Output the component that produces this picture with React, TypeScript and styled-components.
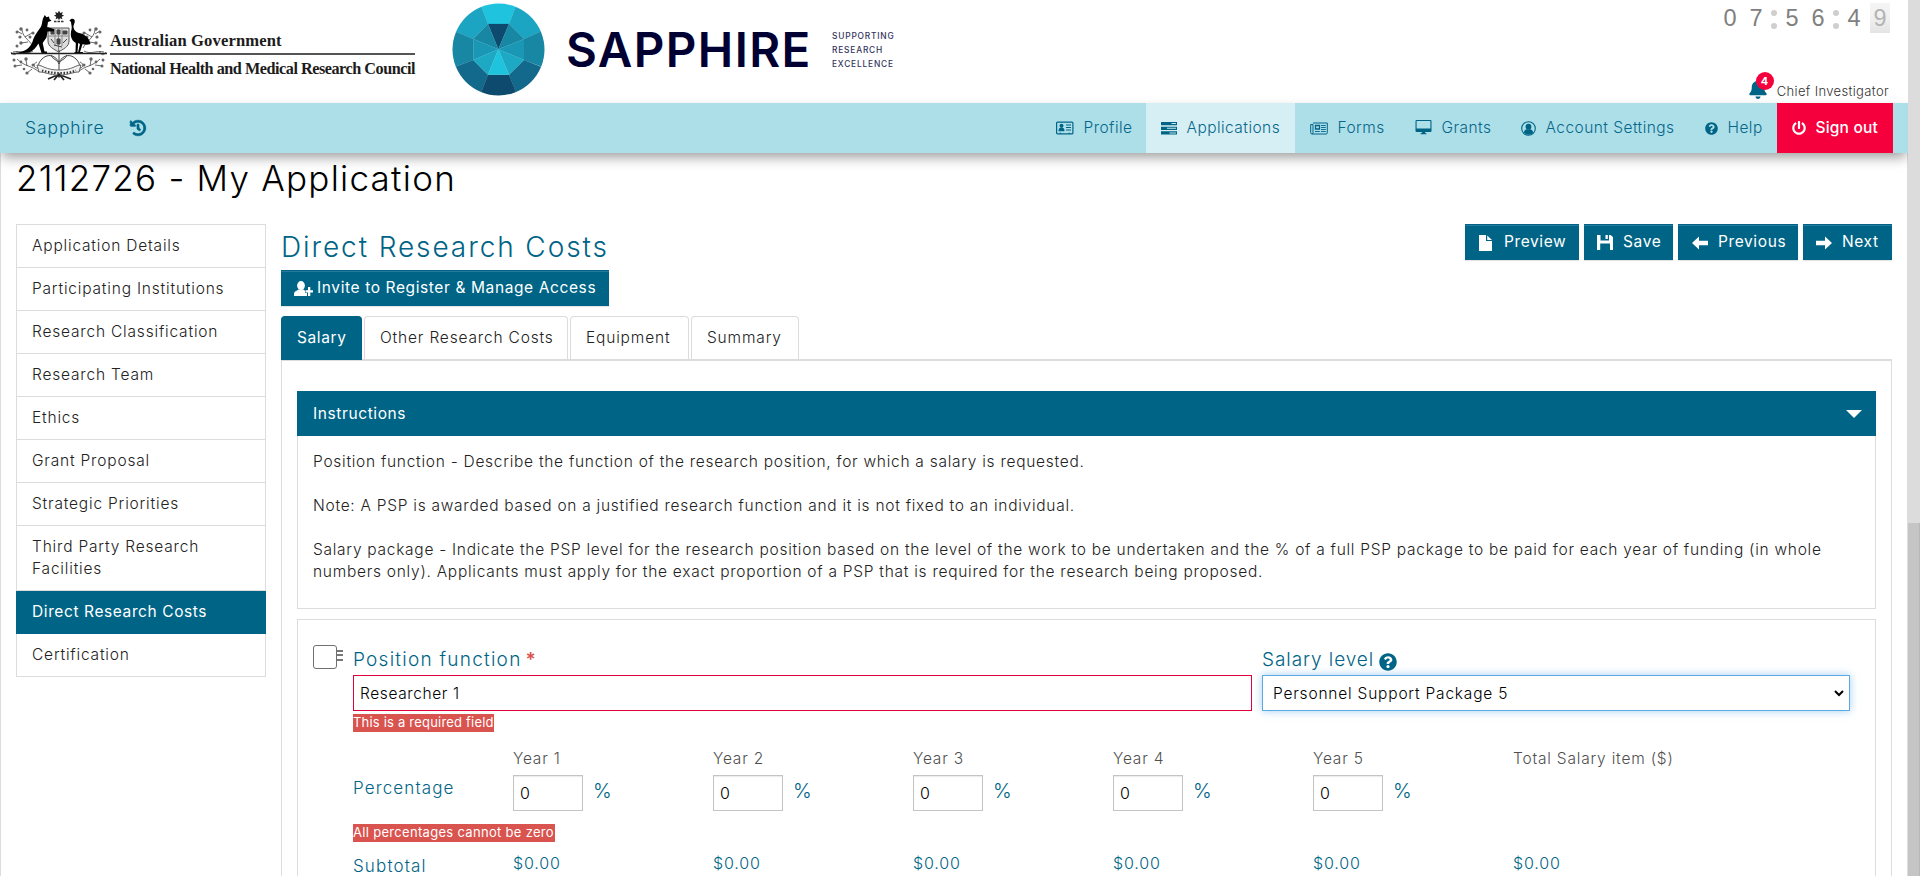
import React from "react";
import styled, { createGlobalStyle } from "styled-components";
import { FaBell, FaHistory, FaPowerOff, FaQuestionCircle } from "react-icons/fa";

const teal = "#006486";
const line = "#dcdcdc";
const red = "#f5003d";

const GlobalStyle = createGlobalStyle`
  *, *::before, *::after { box-sizing: border-box; }
  body {
    margin: 0;
    background: #fff;
    color: #222;
    font-family: Inter, "Liberation Sans", sans-serif;
    font-size: 15.5px;
    font-weight: 300;
    line-height: 22px;
    overflow: hidden;
  }
  h1, h2, p, ul { margin: 0; padding: 0; font-weight: 300; }
  svg { display: block; flex: none; }
`;

const Window = styled.div`
  display: flex;
  width: 1920px;
  height: 876px;
  overflow: hidden;
`;
const Page = styled.div`
  display: flex;
  flex-direction: column;
  width: 1908px;
  overflow: hidden;
`;
const Scrollbar = styled.div`
  width: 12px;
  padding-top: 523px;
  background: ${line};
`;
const Thumb = styled.div`
  height: 353px;
  background: #c5c5c5;
  border-right: 1px solid #b8b8b8;
`;

/* Header */
const Header = styled.header`
  display: flex;
  flex: none;
  height: 103px;
  padding: 3px 18px 0 10px;
`;
const Crest = styled.svg`
  margin-top: 7px;
`;
const Agency = styled.div`
  display: flex;
  flex-direction: column;
  width: 306px;
  margin: 26px 0 0 2px;
  padding-left: 1px;
  font-family: "Liberation Serif", serif;
  font-weight: 700;
  color: #1c1c1c;
  white-space: nowrap;
`;
const AgencyTop = styled.span`
  height: 26px;
  padding-top: 1px;
  border-bottom: 2px solid #555;
  font-size: 16.6px;
  letter-spacing: 0.12px;
`;
const AgencyName = styled.span`
  margin-top: 3px;
  font-size: 16.2px;
  letter-spacing: -0.47px;
`;
const Gem = styled.svg`
  margin-left: 37px;
`;
const Wordmark = styled.div`
  width: 249px;
  margin: 18px 0 0 21px;
  font-size: 47.5px;
  font-weight: 600;
  line-height: 58px;
  letter-spacing: 1.4px;
  color: #000033;
`;
const Tagline = styled.div`
  margin: 26px 0 0 17px;
  font-size: 8.4px;
  font-weight: 500;
  line-height: 14.2px;
  letter-spacing: 0.8px;
  color: #33335c;
`;
const HeaderSide = styled.div`
  display: flex;
  flex-direction: column;
  justify-content: space-between;
  align-items: flex-end;
  margin-left: auto;
`;
const Clock = styled.div`
  display: flex;
  align-items: center;
  height: 30px;
  font-family: "Liberation Sans", Arial, sans-serif;
  font-size: 23.5px;
  line-height: 30px;
  color: #808080;
`;
const Digit = styled.span<{ $flip?: boolean }>`
  width: 20px;
  text-align: center;
  ${(p) =>
    p.$flip &&
    `background: linear-gradient(#f5f5f5, #f0f0f0 50%, #e4e4e4); color: #b4b4b4;`}
  & + & { margin-left: 6px; }
`;
const Colon = styled.span`
  display: flex;
  flex-direction: column;
  gap: 7px;
  margin: 2px 5px 0;
  &::before, &::after {
    content: "";
    width: 6px;
    height: 6px;
    border-radius: 50%;
    background: #cfcfcf;
  }
`;
const User = styled.div`
  display: flex;
  align-items: center;
  height: 24px;
  margin-right: 1px;
  font-size: 13px;
  letter-spacing: 0.35px;
  color: #333;
`;
const Bell = styled.span`
  position: relative;
  margin: -2px 9px 2px 0;
  color: ${teal};
`;
const Count = styled.span`
  position: absolute;
  left: 8px;
  top: -7px;
  width: 18px;
  height: 18px;
  border-radius: 50%;
  background: ${red};
  color: #fff;
  font-size: 11px;
  font-weight: 700;
  line-height: 18px;
  text-align: center;
`;

/* Navigation */
const Nav = styled.nav`
  position: relative;
  display: flex;
  flex: none;
  align-items: stretch;
  height: 50px;
  padding: 0 15px 0 25px;
  background: #addfe9;
  color: ${teal};
  box-shadow: 0 6px 12px -2px rgba(0, 0, 0, 0.4);
`;
const Brand = styled.span`
  width: 105px;
  font-size: 17.5px;
  line-height: 50px;
  letter-spacing: 0.9px;
`;
const BrandIcon = styled.span`
  display: flex;
  align-items: center;
  margin-right: auto;
  svg { stroke: currentColor; stroke-width: 24px; overflow: visible; }
`;
const NavItem = styled.a<{ $w: number; $tone?: "current" | "danger" }>`
  display: flex;
  align-items: center;
  gap: 9.5px;
  width: ${(p) => p.$w}px;
  padding-left: 15px;
  letter-spacing: 0.45px;
  white-space: nowrap;
  background: ${(p) => (p.$tone === "current" ? "#d6eff4" : p.$tone === "danger" ? red : "none")};
  color: ${(p) => (p.$tone === "danger" ? "#fff" : "#06678a")};
  font-weight: ${(p) => (p.$tone === "danger" ? 500 : 300)};
  ${(p) => p.$tone === "danger" && "letter-spacing: 0.2px;"}
  svg { color: ${(p) => (p.$tone === "danger" ? "#fff" : teal)}; }
`;

/* Body */
const Body = styled.main`
  flex: 1;
  padding: 5px 15px 0;
  border: solid ${line};
  border-width: 0 1px;
`;
const Title = styled.h1`
  height: 40px;
  font-size: 35px;
  line-height: 40px;
  letter-spacing: 1.24px;
  color: #000;
`;
const Columns = styled.div`
  display: flex;
  gap: 15px;
  margin-top: 26px;
`;
const Sidebar = styled.ul`
  flex: none;
  align-self: flex-start;
  width: 250px;
  list-style: none;
  border: 1px solid ${line};
  border-top: 0;
`;
const SideItem = styled.li<{ $active?: boolean }>`
  padding: 10px 15px;
  border-top: 1px solid ${line};
  letter-spacing: 0.81px;
  ${(p) =>
    p.$active &&
    `margin: 0 -1px -1px;
     padding: 10px 0 11px 16px;
     position: relative;
     background: ${teal};
     background-clip: padding-box;
     color: #fff;
     font-weight: 400;
     letter-spacing: 0.6px;`}
`;
const Main = styled.section`
  flex: none;
  width: 1611px;
`;
const TopRow = styled.div`
  display: flex;
  justify-content: space-between;
  height: 46px;
`;
const Heading = styled.h2`
  margin: 6px 0 0;
  font-size: 28px;
  line-height: 34px;
  letter-spacing: 1.9px;
  color: ${teal};
`;
const Toolbar = styled.div`
  display: flex;
  gap: 5px;
`;
const Button = styled.button<{ $w: number; $gap: number; $pad: number }>`
  display: flex;
  align-items: center;
  gap: ${(p) => p.$gap}px;
  width: ${(p) => p.$w}px;
  height: 36px;
  padding: 0 0 1px ${(p) => p.$pad}px;
  border: 0;
  background: ${teal};
  box-shadow: inset 0 1px 0 ${teal}, inset 0 2px 0 #26799a, 0 1px 1px rgba(0, 0, 0, 0.1);
  color: #fff;
  font: 400 15.5px/22px Inter, sans-serif;
  letter-spacing: 0.61px;
  white-space: nowrap;
  svg { margin-top: 2px; }
`;
const Tabs = styled.div`
  display: flex;
  gap: 2px;
  height: 45px;
  margin-top: 10px;
  border-bottom: 2px solid ${line};
`;
const Tab = styled.div<{ $w: number; $active?: boolean }>`
  width: ${(p) => p.$w}px;
  height: ${(p) => (p.$active ? 44 : 43)}px;
  padding-left: 15px;
  border: 1px solid ${(p) => (p.$active ? teal : line)};
  border-bottom: 0;
  border-radius: 4px 4px 0 0;
  background: ${(p) => (p.$active ? teal : "#fff")};
  color: ${(p) => (p.$active ? "#fff" : "#222")};
  font-weight: ${(p) => (p.$active ? 400 : 300)};
  letter-spacing: ${(p) => (p.$active ? 0.6 : 0.83)}px;
  line-height: 42px;
`;
const Panel = styled.div`
  padding: 30px 15px 0;
  height: 560px;
  border: solid ${line};
  border-width: 0 1px;
`;
const CardHead = styled.div`
  display: flex;
  align-items: center;
  justify-content: space-between;
  height: 45px;
  padding: 0 14px 0 16px;
  background: ${teal};
  color: #fff;
  font-weight: 400;
  letter-spacing: 0.6px;
`;
const CardBody = styled.div`
  height: 173px;
  padding: 15px 15px 0;
  border: 1px solid ${line};
  border-top: 0;
  letter-spacing: 0.73px;
  p + p { margin-top: 22px; }
`;
const Entry = styled.div`
  display: flex;
  margin-top: 10px;
  padding: 26px 25px 0 15px;
  height: 400px;
  border: 1px solid ${line};
`;
const Check = styled.span`
  width: 24px;
  height: 24px;
  margin-top: -1px;
  border: 1px solid #707070;
  border-radius: 3px;
`;
const Grip = styled.span`
  width: 6px;
  height: 11px;
  margin: 4px 10px 0 0;
  background: repeating-linear-gradient(#777 0 2px, #fff 2px 4.5px);
`;
const Fields = styled.div`
  flex: 1;
`;
const FieldRow = styled.div`
  display: grid;
  grid-template-columns: 899px 588px;
  gap: 10px;
`;
const Label = styled.label<{ $spacing: number }>`
  display: flex;
  align-items: center;
  height: 29px;
  padding-bottom: 2px;
  font-size: 19px;
  letter-spacing: ${(p) => p.$spacing}px;
  color: ${teal};
  svg { margin: 5px 0 0 5px; }
`;
const Star = styled.span`
  margin-left: 4px;
  color: #d9534f;
  font-weight: 600;
`;
const TextBox = styled.div`
  height: 36px;
  padding: 1px 0 0 6px;
  border: 1px solid #e0003c;
  color: #000;
  line-height: 34px;
  letter-spacing: 0.6px;
`;
const SelectBox = styled(TextBox)`
  display: flex;
  align-items: center;
  justify-content: space-between;
  padding: 1px 5px 0 10px;
  border-color: #5fa9e3;
  box-shadow: 0 0 8px rgba(102, 175, 233, 0.6);
  letter-spacing: 0.8px;
`;
const ErrorNote = styled.div<{ $w: number; $spacing: number }>`
  width: ${(p) => p.$w}px;
  height: 18px;
  background: #d9534f;
  color: #fff;
  font-size: 13px;
  font-weight: 400;
  line-height: 17px;
  letter-spacing: ${(p) => p.$spacing}px;
  white-space: nowrap;
`;
const Grid = styled.div<{ $top: number }>`
  display: grid;
  grid-template-columns: 160px repeat(5, 200px) 1fr;
  margin-top: ${(p) => p.$top}px;
`;
const Year = styled.span`
  height: 28px;
  padding-top: 1px;
  color: #505050;
  letter-spacing: 0.8px;
`;
const RowName = styled.span`
  font-size: 17px;
  line-height: 26px;
  letter-spacing: 1.13px;
  color: ${teal};
`;
const Percent = styled.span`
  display: flex;
  gap: 10px;
  font-size: 20px;
  line-height: 32px;
  color: ${teal};
`;
const NumberBox = styled(TextBox)`
  width: 70px;
  padding-top: 0;
  border-color: #c4c4c4;
  box-shadow: inset 0 1px 1px rgba(0, 0, 0, 0.08);
  font-size: 16px;
`;
const Amount = styled.span`
  margin-top: -1px;
  font-size: 16px;
  letter-spacing: 0.85px;
  color: ${teal};
`;
const Notes = styled.div`
  margin-top: 3px;
`;
const ZeroNote = styled.div`
  margin-top: 13px;
`;

/* Drawings */
function Sprig() {
  return (
    <g fill="none" stroke="#444" strokeWidth="0.800">
      <path d="M1 52c2 5 7 2 6-1M3 52c8-2 13 3 20-1M24 48C20 40 13 38 12 30M18 42l-7 1M15 37l7-4M12 34l-5-3" />
      <path d="M7 59c8 8 14 6 22 13M12 65l-7 1M17 66l-1-6M22 69l-5 4M27 62c-5 2-3 7 2 6" />
      <g fill="#666" stroke="none">
        <circle cx="11" cy="29" r="1.800" /><circle cx="7" cy="32" r="1.500" /><circle cx="10" cy="37" r="1.600" />
        <circle cx="17" cy="30" r="1.400" /><circle cx="23" cy="33" r="1.600" /><circle cx="11" cy="43" r="1.700" />
        <circle cx="20" cy="37" r="1.500" /><circle cx="7" cy="46" r="1.500" /><circle cx="4" cy="60" r="1.500" />
        <circle cx="5" cy="66" r="1.500" /><circle cx="16" cy="59" r="1.700" /><circle cx="11" cy="62" r="1.400" />
        <circle cx="17" cy="73" r="1.600" /><circle cx="23" cy="65" r="1.500" /><circle cx="14" cy="69" r="1.300" />
      </g>
    </g>
  );
}
function CoatOfArms() {
  return (
    <Crest width="97" height="71" viewBox="0 10 97 71">
      <Sprig />
      <g transform="matrix(-1 0 0 1 97 0)"><Sprig /></g>
      <path d="M49 10.500l1.200 2.400 2.600-.9-.9 2.600 2.200 1.200-2.400 1 .7 2.400-2.400-1-1 2-1-2-2.400 1 .7-2.400-2.400-1 2.200-1.200-.9-2.600 2.600.9z" fill="#222" />
      <path d="M44 21.500h10" stroke="#333" strokeWidth="1.500" strokeDasharray="2.500 1" />
      <path d="M38 28h21v13c0 6-6 8-10.500 11C44 49 38 47 38 41z" fill="#ddd" stroke="#555" />
      <path d="M39 36h19M45 29v17M52 29v17M48.500 29v22" stroke="#888" />
      <path d="M41 31h3v3h-3zM47 30h3v4h-3zM53 31h4v3h-4zM41 39l3 4M47 39h3v5h-3zM53 43l4-4M44 45l8 2" fill="#444" stroke="#444" />
      <path d="M34 16.500l.8-1.500 1.700 2.300 2.500-.8.5 2.500 2 1.700-3.500 1.300-.8 5 7.300 2.300-.5 2-6.500.2-1 6-3.800 5.500 1.800 8.500h2.500v1.500h-5.500l-3-9.500c-2.500 4-5 7-8.500 8.500-3 1-8 1.300-13 .8 9-1.500 13-5 15.500-11 2-8 7.500-12 9-16.500 1-3 .5-5.500 2.500-8.800z" fill="#000" />
      <path d="M59.500 20.500c1.500-2.500 5-2.300 5.300.3.200 2.700-1.800 4.200-1.300 6.700.6 3 2.500 4.500 5.500 5.500 6 1 10.500 5.500 11.500 11-3 1-5 .8-8 .3l-2.500 7.700h3v1.500h-5.200l2.200-9.500-1.800-1-.7 9h1.500v1.500h-4.500v-1.500h1l.3-9c-5-3-5.800-8-4.300-13.500.8-3-.5-5-.5-7.500z" fill="#000" />
      <path d="M1 53.500h96" stroke="#222" strokeWidth="1.500" />
      <path d="M49 50v28M49 62c-5-8-12-8-17-3s-5 10 3 12M49 62c5-8 12-8 17-3s5 10-3 12M41 55c2 5 6 4 8 9 2-5 6-4 8-9" fill="none" stroke="#444" />
      <path d="M27 65c6 0 8 5 22 5s16-5 22-5l-2 7c-6 0-10 3-20 3s-14-3-20-3z" fill="#f0f0f0" stroke="#444" strokeWidth="0.800" />
      <path d="M32 70.500c10 3 24 4 34 0" fill="none" stroke="#333" strokeWidth="2.200" strokeDasharray="1.500 1.600" />
      <path d="M38 79l7-3h8l8 3M44 80l5-6 5 6" fill="none" stroke="#222" strokeWidth="1.700" />
    </Crest>
  );
}
const facets: [string, string][] = [
  ["155,22 145,0 268,0 258,22 238,73 175,73", "#20c3dd"],
  ["258,22 268,0 350,0 350,89 330,97 283,118 238,73", "#1ba5c3"],
  ["155,22 145,0 60,0 60,89 80,97 131,118 175,73", "#1ba5c3"],
  ["350,89 350,208 332,200 283,181 283,118 330,97", "#1787a4"],
  ["60,89 60,208 80,200 131,181 131,118 80,97", "#1787a4"],
  ["350,208 350,300 268,300 238,225 283,181", "#12698b"],
  ["60,208 60,300 146,300 175,225 131,181", "#12698b"],
  ["238,225 268,300 146,300 175,225", "#0d4a6d"],
  ["175,73 238,73 206,149", "#0d4a6d"],
  ["238,73 283,118 206,149", "#1787a4"],
  ["175,73 131,118 206,149", "#1787a4"],
  ["283,118 283,181 206,149", "#1a97b5"],
  ["131,118 131,181 206,149", "#1a97b5"],
  ["283,181 238,225 206,149", "#1da9c4"],
  ["131,181 175,225 206,149", "#1da9c4"],
  ["175,225 238,225 206,149", "#20c3dd"],
];
function SapphireGem() {
  return (
    <Gem width="93" height="93" viewBox="67 10 279 279">
      <clipPath id="gem"><circle cx="206.500" cy="149.500" r="138" /></clipPath>
      <g clipPath="url(#gem)">
        {facets.map(([points, fill]) => (
          <polygon key={points} points={points} fill={fill} stroke={fill} strokeWidth="0.600" />
        ))}
      </g>
    </Gem>
  );
}
const IdCard = () => (
  <svg width="18" height="14" viewBox="0 0 18 14" fill="currentColor">
    <rect x="0.600" y="1.100" width="16.300" height="11.800" rx="1" fill="none" stroke="currentColor" strokeWidth="1.200" />
    <circle cx="5.500" cy="4.800" r="2" />
    <path d="M2.500 10.200c0-3 1.200-3.600 3-3.600s3 .6 3 3.600z" />
    <path d="M10 3.500h5v1.100h-5zM10 6h5v1.100h-5zM10 8.500h5v1.100h-5zM3.500 11.800h1.500v1H3.500zM12.500 11.800H14v1h-1.500z" />
  </svg>
);
const Tasks = () => (
  <svg width="16" height="14" viewBox="0 0 16 14">
    <path d="M0 1h16v3.200H0zM0 5.700h16v3.200H0zM0 10.300h16v3.200H0z" fill="currentColor" />
    <path d="M10.500 2.100H15v1h-4.500zM6 6.800h9v1H6zM8.500 11.400H15v1H8.500z" fill="#c9e6ee" />
  </svg>
);
const Newspaper = () => (
  <svg width="18" height="13" viewBox="0 0 18 13" fill="none" stroke="currentColor">
    <path d="M3 1h14.300v9.800a1.200 1.200 0 0 1-1.200 1.200H2.200A1.400 1.400 0 0 1 .7 10.600V2.500H3v8.300a1 1 0 0 1-1 1.100" />
    <path d="M5.500 3.500h4v3.500h-4z" strokeWidth="1.300" />
    <path d="M11 3.500h4.800M11 5.500h4.800M11 7.500h4.800M5 9.500h4.800M11 9.500h4.800" strokeWidth="0.900" />
  </svg>
);
const Monitor = () => (
  <svg width="17" height="16" viewBox="0 0 17 16" fill="currentColor">
    <path d="M1.500 0h14a1 1 0 0 1 1 1v10a1 1 0 0 1-1 1h-14a1 1 0 0 1-1-1V1a1 1 0 0 1 1-1zm.1 1.100V8.500h13.800V1.100zM7 12h3l.4 1.200H11.500v1h-6v-1h1.200z" fillRule="evenodd" />
  </svg>
);
const Person = () => (
  <svg width="15" height="15" viewBox="0 0 15 15" fill="currentColor">
    <circle cx="7.500" cy="7.500" r="6.800" fill="none" stroke="currentColor" strokeWidth="1.100" />
    <circle cx="7.500" cy="5.700" r="2.900" />
    <path d="M2.800 11.500c.4-2 1.600-3 3-3.200h3.400c1.400.2 2.600 1.200 3 3.200-2.800 2.900-6.600 2.900-9.400 0z" />
  </svg>
);
const FileIcon = () => (
  <svg width="13" height="16" viewBox="0 0 13 16" fill="#fff">
    <path d="M0 0h7v6h6v10H0zM8.200 0.500L13 5H8.200z" />
  </svg>
);
const Floppy = () => (
  <svg width="16" height="15" viewBox="0 0 16 15" fill="#fff">
    <path d="M0 0h3.500v5.500h8.500V0h1.500L16 2v13h-3V8.500H3.200V15H0zM8.500 0h2.300v4H8.500z" />
  </svg>
);
const Arrow = ({ flip }: { flip?: boolean }) => (
  <svg width="16" height="14" viewBox="0 0 16 14" fill="#fff">
    <path d="M0 7l7-6.500v4.200h9v4.600H7v4.200z" transform={flip ? "matrix(-1 0 0 1 16 0)" : undefined} />
  </svg>
);
const AddPerson = () => (
  <svg width="19" height="16" viewBox="0 0 19 16" fill="#fff">
    <ellipse cx="7" cy="4.600" rx="3.900" ry="4.500" />
    <path d="M0 15v-2.500C0 10.500 2.500 10 4.500 8.500h5l1.500 1.300V12h2v3zM14 6h2.300v3.200H19v2.300h-2.700V15H14v-3.500h-2.500V9.200H14z" />
  </svg>
);

const sections = [
  "Application Details", "Participating Institutions", "Research Classification", "Research Team", "Ethics",
  "Grant Proposal", "Strategic Priorities", "Third Party Research Facilities", "Direct Research Costs", "Certification",
];
const years = [1, 2, 3, 4, 5];

export default function App() {
  return (
    <Window>
      <GlobalStyle />
      <Page>
        <Header>
          <CoatOfArms />
          <Agency>
            <AgencyTop>Australian Government</AgencyTop>
            <AgencyName>National Health and Medical Research Council</AgencyName>
          </Agency>
          <SapphireGem />
          <Wordmark>SAPPHIRE</Wordmark>
          <Tagline>SUPPORTING<br />RESEARCH<br />EXCELLENCE</Tagline>
          <HeaderSide>
            <Clock>
              <Digit>0</Digit><Digit>7</Digit><Colon />
              <Digit>5</Digit><Digit>6</Digit><Colon />
              <Digit>4</Digit><Digit $flip>9</Digit>
            </Clock>
            <User>
              <Bell><FaBell size={20} /><Count>4</Count></Bell>
              Chief Investigator
            </User>
          </HeaderSide>
        </Header>
        <Nav>
          <Brand>Sapphire</Brand>
          <BrandIcon><FaHistory size={16} /></BrandIcon>
          <NavItem $w={105}><IdCard />Profile</NavItem>
          <NavItem $w={149} $tone="current"><Tasks />Applications</NavItem>
          <NavItem $w={105}><Newspaper />Forms</NavItem>
          <NavItem $w={106}><Monitor />Grants</NavItem>
          <NavItem $w={184}><Person />Account Settings</NavItem>
          <NavItem $w={87}><FaQuestionCircle size={13} />Help</NavItem>
          <NavItem $w={116} $tone="danger"><FaPowerOff size={14} />Sign out</NavItem>
        </Nav>
        <Body>
          <Title>2112726 - My Application</Title>
          <Columns>
            <Sidebar>
              {sections.map((s) => <SideItem key={s} $active={s === "Direct Research Costs"}>{s}</SideItem>)}
            </Sidebar>
            <Main>
              <TopRow>
                <Heading>Direct Research Costs</Heading>
                <Toolbar>
                  <Button $w={114} $pad={14} $gap={12}><FileIcon />Preview</Button>
                  <Button $w={89} $pad={13} $gap={10}><Floppy />Save</Button>
                  <Button $w={120} $pad={14} $gap={10}><Arrow />Previous</Button>
                  <Button $w={89} $pad={13} $gap={10}><Arrow flip />Next</Button>
                </Toolbar>
              </TopRow>
              <Button $w={328} $pad={13} $gap={4}><AddPerson />Invite to Register &amp; Manage Access</Button>
              <Tabs>
                <Tab $w={81} $active>Salary</Tab>
                <Tab $w={204}>Other Research Costs</Tab>
                <Tab $w={119}>Equipment</Tab>
                <Tab $w={108}>Summary</Tab>
              </Tabs>
              <Panel>
                <CardHead>
                  Instructions
                  <svg width="16" height="8" viewBox="0 0 16 8"><path d="M0 0h16L8 8z" fill="#fff" /></svg>
                </CardHead>
                <CardBody>
                  <p>Position function - Describe the function of the research position, for which a salary is requested.</p>
                  <p>Note: A PSP is awarded based on a justified research function and it is not fixed to an individual.</p>
                  <p>
                    Salary package - Indicate the PSP level for the research position based on the level of the work to be
                    undertaken and the % of a full PSP package to be paid for each year of funding (in whole
                    numbers only). Applicants must apply for the exact proportion of a PSP that is required for the research
                    being proposed.
                  </p>
                </CardBody>
                <Entry>
                  <Check />
                  <Grip />
                  <Fields>
                    <FieldRow>
                      <div>
                        <Label $spacing={1.25}>Position function<Star>*</Star></Label>
                        <TextBox>Researcher 1</TextBox>
                      </div>
                      <div>
                        <Label $spacing={0.92}>Salary level<FaQuestionCircle size={18} /></Label>
                        <SelectBox>
                          Personnel Support Package 5
                          <svg width="10" height="7" viewBox="0 0 10 7" fill="none" stroke="#000" strokeWidth="2"><path d="M1 1l4 4 4-4" /></svg>
                        </SelectBox>
                      </div>
                    </FieldRow>
                    <Notes><ErrorNote $w={141} $spacing={0.2}>This is a required field</ErrorNote></Notes>
                    <Grid $top={15}>
                      <span />
                      {years.map((y) => <Year key={y}>Year {y}</Year>)}
                      <Year>Total Salary item ($)</Year>
                      <RowName>Percentage</RowName>
                      {years.map((y) => <Percent key={y}><NumberBox>0</NumberBox>%</Percent>)}
                    </Grid>
                    <ZeroNote><ErrorNote $w={202} $spacing={0.31}>All percentages cannot be zero</ErrorNote></ZeroNote>
                    <Grid $top={11}>
                      <RowName>Subtotal</RowName>
                      {years.map((y) => <Amount key={y}>$0.00</Amount>)}
                      <Amount>$0.00</Amount>
                    </Grid>
                  </Fields>
                </Entry>
              </Panel>
            </Main>
          </Columns>
        </Body>
      </Page>
      <Scrollbar><Thumb /></Scrollbar>
    </Window>
  );
}
